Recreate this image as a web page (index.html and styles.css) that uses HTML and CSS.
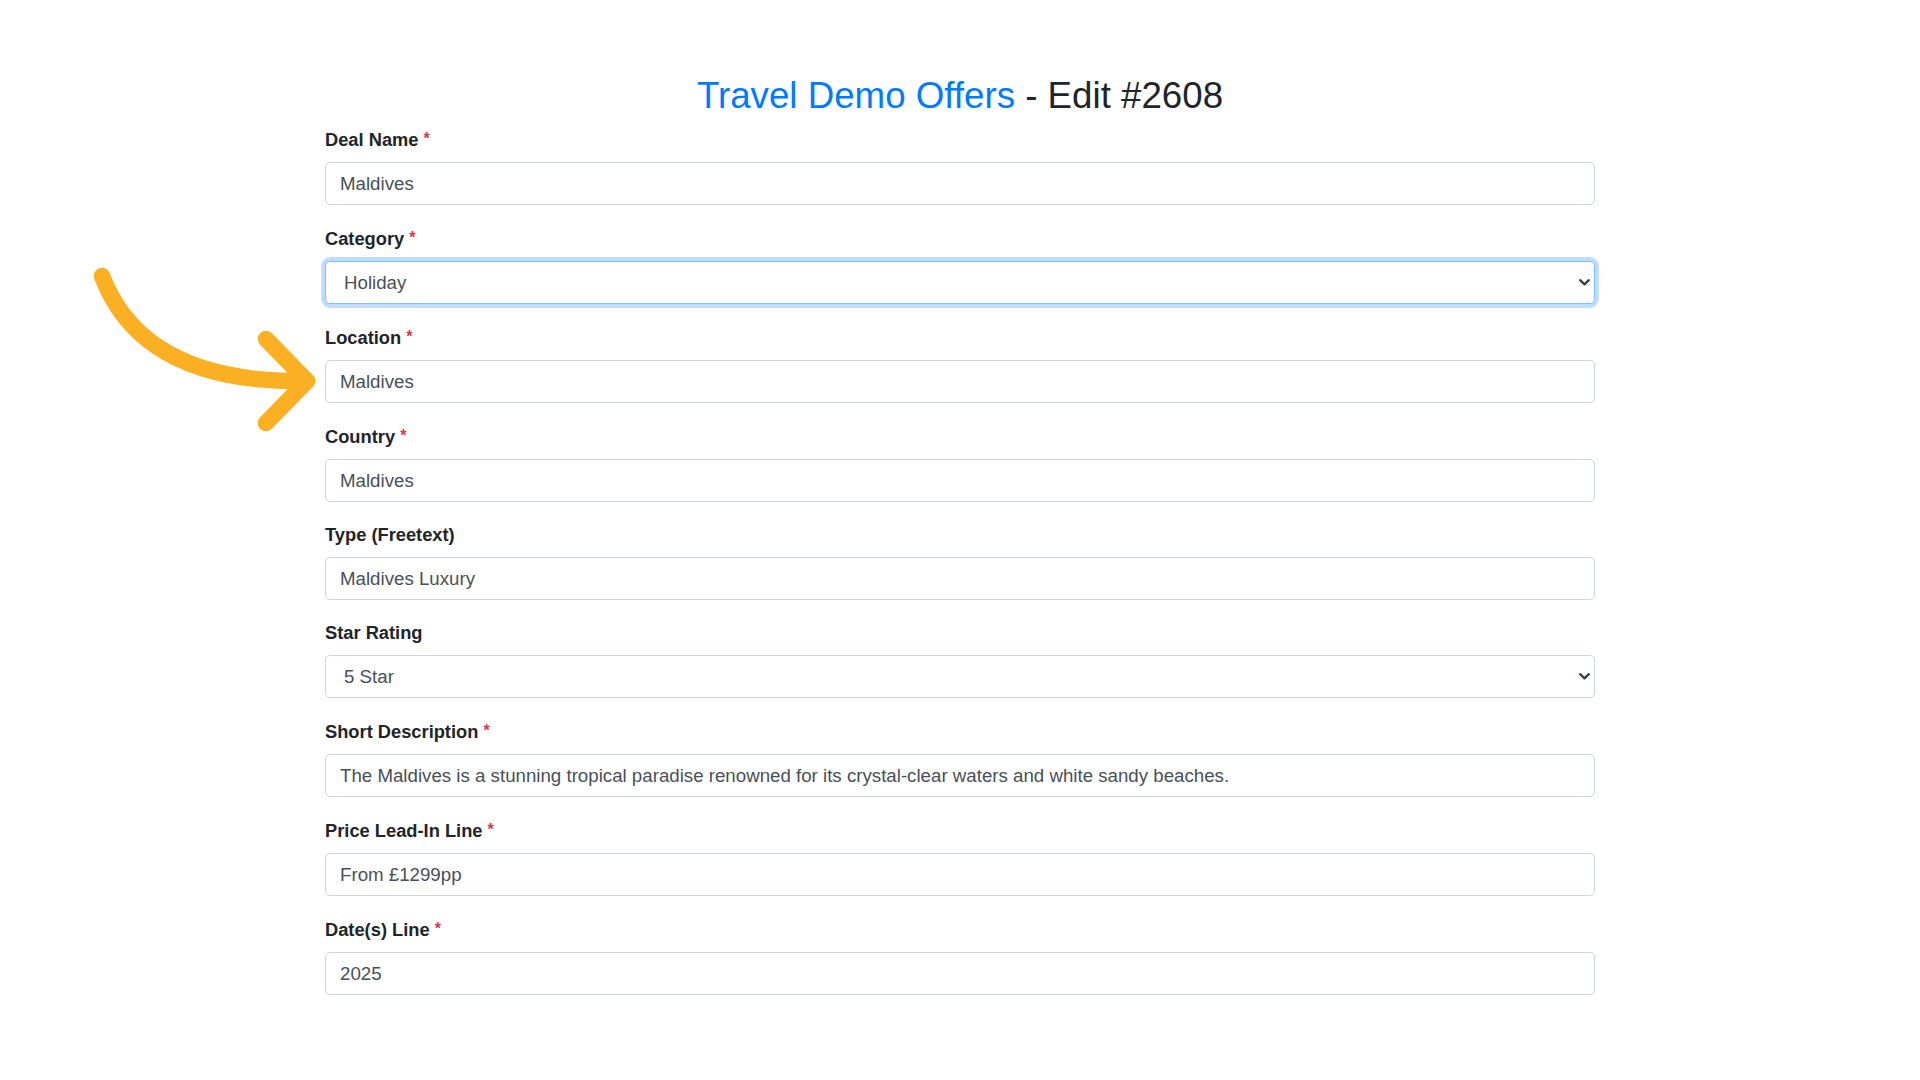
FILE: index.html
```html
<!DOCTYPE html>
<html lang="en">
<head>
<meta charset="utf-8">
<title>Travel Demo Offers - Edit #2608</title>
<link rel="stylesheet" href="styles.css">
</head>
<body>
<svg class="arrow" width="340" height="440" viewBox="0 0 340 440" aria-hidden="true">
  <path d="M102 276 C130 350 200 383 307 381" />
  <path d="M266 339 L307 381 L266 423" />
</svg>
<main class="page">
  <h1 class="title"><span class="brand">Travel Demo Offers</span> - Edit #2608</h1>
  <form class="form">
    <div class="field">
      <label class="label">Deal Name <span class="req">*</span></label>
      <input class="control" type="text" value="Maldives">
    </div>
    <div class="field">
      <label class="label">Category <span class="req">*</span></label>
      <div class="select-wrap">
        <select class="control select focused"><option>Holiday</option></select>
        <svg class="chev" width="11" height="7" viewBox="0 0 11 7"><path d="M1.2 1.2 L5.5 5.3 L9.8 1.2"/></svg>
      </div>
    </div>
    <div class="field">
      <label class="label">Location <span class="req">*</span></label>
      <input class="control" type="text" value="Maldives">
    </div>
    <div class="field">
      <label class="label">Country <span class="req">*</span></label>
      <input class="control" type="text" value="Maldives">
    </div>
    <div class="field">
      <label class="label">Type (Freetext)</label>
      <input class="control" type="text" value="Maldives Luxury">
    </div>
    <div class="field">
      <label class="label">Star Rating</label>
      <div class="select-wrap">
        <select class="control select"><option>5 Star</option></select>
        <svg class="chev" width="11" height="7" viewBox="0 0 11 7"><path d="M1.2 1.2 L5.5 5.3 L9.8 1.2"/></svg>
      </div>
    </div>
    <div class="field">
      <label class="label">Short Description <span class="req">*</span></label>
      <input class="control" type="text" value="The Maldives is a stunning tropical paradise renowned for its crystal-clear waters and white sandy beaches.">
    </div>
    <div class="field">
      <label class="label">Price Lead-In Line <span class="req">*</span></label>
      <input class="control" type="text" value="From £1299pp">
    </div>
    <div class="field">
      <label class="label">Date(s) Line <span class="req">*</span></label>
      <input class="control" type="text" value="2025">
    </div>
  </form>
</main>
</body>
</html>
```

FILE: styles.css
```css
* { box-sizing: border-box; }
html, body { margin: 0; padding: 0; background: #ffffff; }
body {
  font-family: "Liberation Sans", Arial, sans-serif;
  color: #212529;
  position: relative;
  min-height: 1080px;
}
.page {
  width: 1270px;
  margin: 0 auto;
  padding-top: 74px;
}
.title {
  margin: 0 0 8.2px 0;
  font-size: 36.7px;
  line-height: 44px;
  font-weight: 400;
  text-align: center;
  color: #212529;
}
.brand { color: #007bff; }
.form { display: flex; flex-direction: column; }
.field {
  display: flex;
  flex-direction: column;
  margin-bottom: 19.7px;
}
.label {
  font-size: 18.3px;
  line-height: 26.5px;
  font-weight: 700;
  color: #212529;
  margin-bottom: 8.8px;
}
.req { color: #dc3545; font-weight: 700; font-size: 16px; vertical-align: 2px; }
.control {
  display: block;
  width: 100%;
  height: 43px;
  margin: 0;
  padding: 0 14px;
  font-family: "Liberation Sans", Arial, sans-serif;
  font-size: 18.7px;
  color: #495057;
  background: #ffffff;
  border: 1px solid #ced4da;
  border-radius: 5px;
  outline: none;
}
.select-wrap { position: relative; }
.select {
  -webkit-appearance: none;
  appearance: none;
  padding-left: 18px;
}
.select.focused {
  border-color: #80bdff;
  box-shadow: 0 0 0 3.9px rgba(0, 123, 255, 0.25);
}
.chev {
  position: absolute;
  right: 5px;
  top: 18px;
  fill: none;
  stroke: #3a3f45;
  stroke-width: 2.3;
  stroke-linecap: round;
  stroke-linejoin: round;
}
.arrow {
  position: absolute;
  left: 0;
  top: 0;
  fill: none;
  stroke: #fbb024;
  stroke-width: 16.5;
  stroke-linecap: round;
  stroke-linejoin: round;
  z-index: 2;
}
```
